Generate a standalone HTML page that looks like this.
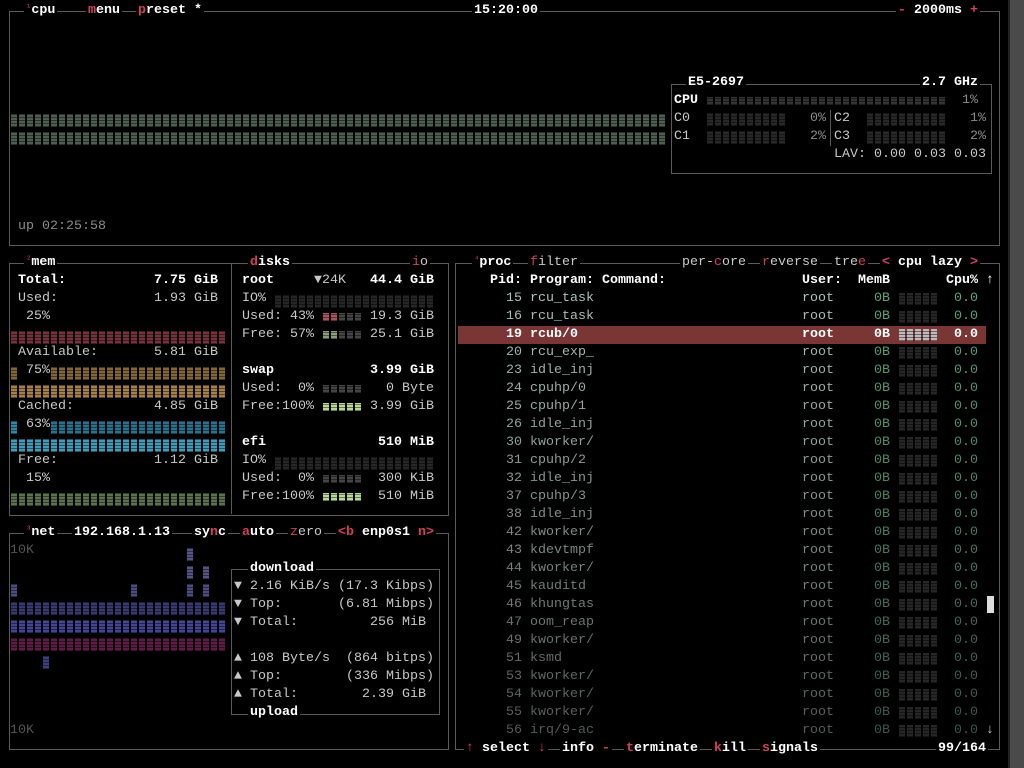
<!DOCTYPE html>
<html><head><meta charset="utf-8"><style>
body{margin:0;width:1024px;height:768px;background:#000;overflow:hidden;position:relative;font-family:"Liberation Mono",monospace;font-size:13.33px;color:#c8c8c8}
.b{position:absolute;border:1px solid #5a5a5a}
.t{position:absolute;white-space:pre;line-height:18px;height:18px}
.w{color:#fff;font-weight:bold}
.h{background:#000;padding:0 2px}
.r{color:#d0405a}
.g{color:#8a8a8a}
.s{color:#d0405a;font-size:9px;vertical-align:top;line-height:12px}
.bar{position:absolute;height:13px}
.bar::after{content:"";position:absolute;inset:0;background:repeating-linear-gradient(0deg,rgba(0,0,0,.45) 0 1px,transparent 1px 3px)}
</style></head><body>
<div style="position:absolute;left:1008px;top:0;width:16px;height:768px;background:#4a4a4a"></div>
<div style="position:absolute;left:1008px;top:0;width:2px;height:768px;background:#222"></div>

<!-- CPU box -->
<div class="b" style="left:9px;top:11px;width:989px;height:233px"></div>
<div class="t h" style="left:24px;top:2px"><span class="s">¹</span><span class="w">cpu</span></div>
<div class="t h" style="left:86px;top:2px"><span class="r w">m</span><span class="w">enu</span></div>
<div class="t h" style="left:136px;top:2px"><span class="r w">p</span><span class="w">reset *</span></div>
<div class="t h w" style="left:472px;top:2px">15:20:00</div>
<div class="t h w" style="left:896px;top:2px"><span class="r">-</span> 2000ms <span class="r">+</span></div>
<div class="bar" style="left:11px;top:114px;width:654px;background:repeating-linear-gradient(90deg,#7f9e86 0 6px,transparent 6px 8px);opacity:.6"></div>
<div class="bar" style="left:11px;top:132px;width:654px;background:repeating-linear-gradient(90deg,#7f9e86 0 6px,transparent 6px 8px);opacity:.6"></div>
<div class="t g" style="left:18px;top:218px">up 02:25:58</div>

<div class="b" style="left:671px;top:84px;width:319px;height:88px"></div>
<div class="t h w" style="left:686px;top:74px">E5-2697</div>
<div class="t h w" style="left:920px;top:74px">2.7 GHz</div>
<div class="t w" style="left:674px;top:92px">CPU</div>
<div class="bar" style="left:707px;top:97px;width:240px;height:8px;background:repeating-linear-gradient(90deg,#333 0 6px,transparent 6px 8px)"></div>
<div class="t g" style="left:962px;top:92px">1%</div>
<div class="t" style="left:674px;top:110px">C0</div><div class="bar" style="left:707px;top:113px;width:80px;background:repeating-linear-gradient(90deg,#282828 0 6px,transparent 6px 8px)"></div><div class="t g" style="left:810px;top:110px">0%</div>
<div class="t" style="left:674px;top:128px">C1</div><div class="bar" style="left:707px;top:131px;width:80px;background:repeating-linear-gradient(90deg,#282828 0 6px,transparent 6px 8px)"></div><div class="t g" style="left:810px;top:128px">2%</div>
<div style="position:absolute;left:830px;top:110px;width:1px;height:36px;background:#5a5a5a"></div>
<div class="t" style="left:834px;top:110px">C2</div><div class="bar" style="left:867px;top:113px;width:80px;background:repeating-linear-gradient(90deg,#282828 0 6px,transparent 6px 8px)"></div><div class="t g" style="left:970px;top:110px">1%</div>
<div class="t" style="left:834px;top:128px">C3</div><div class="bar" style="left:867px;top:131px;width:80px;background:repeating-linear-gradient(90deg,#282828 0 6px,transparent 6px 8px)"></div><div class="t g" style="left:970px;top:128px">2%</div>
<div class="t" style="left:834px;top:146px">LAV: 0.00 0.03 0.03</div>

<!-- MEM box -->
<div class="b" style="left:9px;top:263px;width:438px;height:251px"></div>
<div style="position:absolute;left:231px;top:263px;width:1px;height:251px;background:#5a5a5a"></div>
<div class="t h" style="left:24px;top:254px"><span class="s">²</span><span class="w">mem</span></div>
<div class="t h" style="left:248px;top:254px"><span class="r w">d</span><span class="w">isks</span></div>
<div class="t h" style="left:410px;top:254px"><span class="r">i</span>o</div>
<div class="t w" style="left:18px;top:272px">Total:</div><div class="t w" style="left:154px;top:272px">7.75 GiB</div>
<div class="t" style="left:18px;top:290px">Used:</div><div class="t" style="left:154px;top:290px">1.93 GiB</div>
<div class="t" style="left:26px;top:308px">25%</div>
<div class="bar" style="left:11px;top:331px;width:216px;background:repeating-linear-gradient(90deg,#a04050 0 6px,transparent 6px 8px);opacity:.75"></div>
<div class="t" style="left:18px;top:344px">Available:</div><div class="t" style="left:154px;top:344px">5.81 GiB</div>
<div class="bar" style="left:51px;top:367px;width:176px;background:repeating-linear-gradient(90deg,#b08840 0 6px,transparent 6px 8px);opacity:.75"></div>
<div class="bar" style="left:11px;top:367px;width:6px;background:#b08840;opacity:.75"></div><div class="t" style="left:26px;top:362px">75%</div>
<div class="bar" style="left:11px;top:385px;width:216px;background:repeating-linear-gradient(90deg,#d0a050 0 6px,transparent 6px 8px);opacity:.8"></div>
<div class="t" style="left:18px;top:398px">Cached:</div><div class="t" style="left:154px;top:398px">4.85 GiB</div>
<div class="bar" style="left:51px;top:421px;width:176px;background:repeating-linear-gradient(90deg,#2a88a8 0 6px,transparent 6px 8px);opacity:.85"></div>
<div class="bar" style="left:11px;top:421px;width:6px;background:#2a88a8"></div><div class="t" style="left:26px;top:416px">63%</div>
<div class="bar" style="left:11px;top:439px;width:216px;background:repeating-linear-gradient(90deg,#40b0d0 0 6px,transparent 6px 8px);opacity:.9"></div>
<div class="t" style="left:18px;top:452px">Free:</div><div class="t" style="left:154px;top:452px">1.12 GiB</div>
<div class="t" style="left:26px;top:470px">15%</div>
<div class="bar" style="left:11px;top:493px;width:216px;background:repeating-linear-gradient(90deg,#7a9a60 0 6px,transparent 6px 8px);opacity:.75"></div>

<div class="t w" style="left:242px;top:272px">root</div><div class="t" style="left:314px;top:272px">▼24K</div><div class="t w" style="left:370px;top:272px">44.4 GiB</div>
<div class="t" style="left:242px;top:290px">IO%</div><div class="bar" style="left:275px;top:295px;width:160px;background:repeating-linear-gradient(90deg,#262626 0 6px,transparent 6px 8px)"></div>
<div class="t" style="left:242px;top:308px">Used: 43%</div><div class="bar" style="left:323px;top:313px;width:38px;height:8px;background:repeating-linear-gradient(90deg,#b05060 0 6px,transparent 6px 8px)"></div><div class="bar" style="left:339px;top:313px;width:22px;height:8px;background:repeating-linear-gradient(90deg,#444 0 6px,#000 6px 8px)"></div><div class="t" style="left:370px;top:308px">19.3 GiB</div>
<div class="t" style="left:242px;top:326px">Free: 57%</div><div class="bar" style="left:323px;top:331px;width:38px;height:8px;background:repeating-linear-gradient(90deg,#8aa070 0 6px,transparent 6px 8px)"></div><div class="bar" style="left:339px;top:331px;width:22px;height:8px;background:repeating-linear-gradient(90deg,#444 0 6px,#000 6px 8px)"></div><div class="t" style="left:370px;top:326px">25.1 GiB</div>
<div class="t w" style="left:242px;top:362px">swap</div><div class="t w" style="left:370px;top:362px">3.99 GiB</div>
<div class="t" style="left:242px;top:380px">Used:  0%</div><div class="bar" style="left:323px;top:385px;width:38px;height:8px;background:repeating-linear-gradient(90deg,#444 0 6px,transparent 6px 8px)"></div><div class="t" style="left:386px;top:380px">0 Byte</div>
<div class="t" style="left:242px;top:398px">Free:100%</div><div class="bar" style="left:323px;top:403px;width:38px;height:8px;background:repeating-linear-gradient(90deg,#b8d890 0 6px,transparent 6px 8px)"></div><div class="t" style="left:370px;top:398px">3.99 GiB</div>
<div class="t w" style="left:242px;top:434px">efi</div><div class="t w" style="left:378px;top:434px">510 MiB</div>
<div class="t" style="left:242px;top:452px">IO%</div><div class="bar" style="left:275px;top:457px;width:160px;background:repeating-linear-gradient(90deg,#262626 0 6px,transparent 6px 8px)"></div>
<div class="t" style="left:242px;top:470px">Used:  0%</div><div class="bar" style="left:323px;top:475px;width:38px;height:8px;background:repeating-linear-gradient(90deg,#444 0 6px,transparent 6px 8px)"></div><div class="t" style="left:378px;top:470px">300 KiB</div>
<div class="t" style="left:242px;top:488px">Free:100%</div><div class="bar" style="left:323px;top:493px;width:38px;height:8px;background:repeating-linear-gradient(90deg,#b8d890 0 6px,transparent 6px 8px)"></div><div class="t" style="left:378px;top:488px">510 MiB</div>

<!-- NET box -->
<div class="b" style="left:9px;top:533px;width:438px;height:215px"></div>
<div class="t h" style="left:24px;top:524px"><span class="s">³</span><span class="w">net</span></div>
<div class="t h w" style="left:72px;top:524px">192.168.1.13</div>
<div class="t h w" style="left:192px;top:524px">sy<span class="r">n</span>c</div>
<div class="t h w" style="left:240px;top:524px"><span class="r">a</span>uto</div>
<div class="t h" style="left:288px;top:524px"><span class="r">z</span>ero</div>
<div class="t h w" style="left:336px;top:524px"><span class="r">&lt;b</span> enp0s1 <span class="r">n&gt;</span></div>
<div class="t" style="left:10px;top:542px;color:#555">10K</div>
<div class="t" style="left:10px;top:722px;color:#555">10K</div>
<div class="bar" style="left:187px;top:548px;width:6px;background:#6a6aa8;opacity:.8"></div>
<div class="bar" style="left:187px;top:566px;width:22px;background:repeating-linear-gradient(90deg,#6a6aa8 0 6px,transparent 6px 16px);opacity:.8"></div>
<div class="bar" style="left:11px;top:584px;width:198px;opacity:.8;background:linear-gradient(90deg,#6060a0 0 6px,transparent 6px 120px,#6060a0 120px 126px,transparent 126px 176px,#6060a0 176px 182px,transparent 182px 192px,#6060a0 192px 198px)"></div>
<div class="bar" style="left:11px;top:602px;width:216px;background:repeating-linear-gradient(90deg,#5050a0 0 6px,transparent 6px 8px);opacity:.7"></div>
<div class="bar" style="left:11px;top:620px;width:216px;background:repeating-linear-gradient(90deg,#5050b0 0 6px,transparent 6px 8px);opacity:.85"></div>
<div class="bar" style="left:11px;top:638px;width:216px;background:repeating-linear-gradient(90deg,#702050 0 6px,transparent 6px 8px);opacity:.85"></div>
<div class="bar" style="left:43px;top:656px;width:6px;background:#5050a0;opacity:.8"></div>
<div class="b" style="left:231px;top:569px;width:207px;height:144px"></div>
<div class="t h w" style="left:248px;top:560px">download</div>
<div class="t h w" style="left:248px;top:704px">upload</div>
<div class="t" style="left:234px;top:578px">▼ 2.16 KiB/s (17.3 Kibps)</div>
<div class="t" style="left:234px;top:596px">▼ Top:       (6.81 Mibps)</div>
<div class="t" style="left:234px;top:614px">▼ Total:         256 MiB</div>
<div class="t" style="left:234px;top:650px">▲ 108 Byte/s  (864 bitps)</div>
<div class="t" style="left:234px;top:668px">▲ Top:        (336 Mibps)</div>
<div class="t" style="left:234px;top:686px">▲ Total:        2.39 GiB</div>

<!-- PROC box -->
<div class="b" style="left:455px;top:263px;width:543px;height:485px"></div>
<div class="t h" style="left:472px;top:254px"><span class="s">⁴</span><span class="w">proc</span></div>
<div class="t h" style="left:528px;top:254px"><span class="r">f</span>ilter</div>
<div class="t h" style="left:680px;top:254px">per-<span class="r">c</span>ore</div>
<div class="t h" style="left:760px;top:254px"><span class="r">r</span>everse</div>
<div class="t h" style="left:832px;top:254px">tre<span class="r">e</span></div>
<div class="t h w" style="left:880px;top:254px"><span class="r">&lt;</span> cpu lazy <span class="r">&gt;</span></div>
<div class="t w" style="left:490px;top:272px">Pid: Program: Command:</div>
<div class="t w" style="left:802px;top:272px">User:  MemB</div>
<div class="t w" style="left:946px;top:272px">Cpu% ↑</div>
<div style="position:absolute;left:458px;top:326px;width:528px;height:18px;background:#7a3535"></div>
<div id="rows"></div>
<div class="t" style="left:986px;top:722px;color:#ccc">↓</div>
<div style="position:absolute;left:987px;top:596px;width:7px;height:17px;background:#ddd"></div>
<div class="t h w" style="left:464px;top:740px"><span class="r">↑</span> select <span class="r">↓</span></div>
<div class="t h w" style="left:560px;top:740px">info <span class="r">-</span></div>
<div class="t h w" style="left:624px;top:740px"><span class="r">t</span>erminate</div>
<div class="t h w" style="left:712px;top:740px"><span class="r">k</span>ill</div>
<div class="t h w" style="left:760px;top:740px"><span class="r">s</span>ignals</div>
<div class="t h w" style="left:936px;top:740px">99/164</div>
<script>
var d=[[15,"rcu_task"],[16,"rcu_task"],[19,"rcub/0"],[20,"rcu_exp_"],[23,"idle_inj"],[24,"cpuhp/0"],[25,"cpuhp/1"],[26,"idle_inj"],[30,"kworker/"],[31,"cpuhp/2"],[32,"idle_inj"],[37,"cpuhp/3"],[38,"idle_inj"],[42,"kworker/"],[43,"kdevtmpf"],[44,"kworker/"],[45,"kauditd"],[46,"khungtas"],[47,"oom_reap"],[49,"kworker/"],[51,"ksmd"],[53,"kworker/"],[54,"kworker/"],[55,"kworker/"],[56,"irq/9-ac"]];
var h="";
d.forEach(function(r,i){var y=290+i*18;var f=i/24;var c;var mc;
if(i==2){c="#fff";mc="#fff";}else{var a=Math.round(170-f*85),b=Math.round(195-f*105),e=Math.round(185-f*95);c="rgb("+a+","+b+","+e+")";mc="rgb("+Math.round(90-f*30)+","+Math.round(165-f*80)+","+Math.round(125-f*50)+")";}
var w=i==2?"font-weight:bold;":"";
h+='<div class="t" style="'+w+'left:490px;top:'+y+'px;width:32px;text-align:right;color:'+c+'">'+r[0]+'</div>';
h+='<div class="t" style="'+w+'left:530px;top:'+y+'px;color:'+c+'">'+r[1]+'</div>';
h+='<div class="t" style="'+w+'left:802px;top:'+y+'px;color:'+c+'">root</div>';
h+='<div class="t" style="'+w+'left:874px;top:'+y+'px;color:'+mc+'">0B</div>';
h+='<div class="bar" style="left:899px;top:'+(y+3)+'px;width:38px;height:12px;background:repeating-linear-gradient(90deg,'+(i==2?"#bbb":"#262626")+' 0 6px,transparent 6px 8px)"></div>';
h+='<div class="t" style="'+w+'left:954px;top:'+y+'px;color:'+mc+'">0.0</div>';});
document.getElementById("rows").innerHTML=h;
</script>
</body></html>
